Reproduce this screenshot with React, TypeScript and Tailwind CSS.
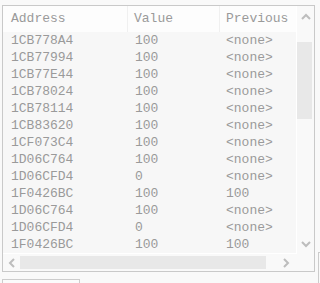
import React from "react";

const rows: [string, string, string][] = [
  ["1CB778A4", "100", "<none>"],
  ["1CB77994", "100", "<none>"],
  ["1CB77E44", "100", "<none>"],
  ["1CB78024", "100", "<none>"],
  ["1CB78114", "100", "<none>"],
  ["1CB83620", "100", "<none>"],
  ["1CF073C4", "100", "<none>"],
  ["1D06C764", "100", "<none>"],
  ["1D06CFD4", "0", "<none>"],
  ["1F0426BC", "100", "100"],
  ["1D06C764", "100", "<none>"],
  ["1D06CFD4", "0", "<none>"],
  ["1F0426BC", "100", "100"],
];

const Chevron = ({ dir }: { dir: "up" | "down" | "left" | "right" }) => {
  const d: Record<string, string> = {
    up: "M1 6 L5 2 L9 6",
    down: "M1 2 L5 6 L9 2",
    left: "M6 1 L2 5 L6 9",
    right: "M2 1 L6 5 L2 9",
  };
  const vert = dir === "up" || dir === "down";
  return (
    <svg width={vert ? 10 : 8} height={vert ? 8 : 10} viewBox={vert ? "0 0 10 8" : "0 0 8 10"}>
      <path d={d[dir]} fill="none" stroke="#bdbdbd" strokeWidth="2" />
    </svg>
  );
};

export default function App() {
  return (
    <div
      className="relative w-[320px] h-[283px] overflow-hidden bg-[#f9f9f9] text-[13px] text-[#9a9a9a]"
      style={{ fontFamily: '"Liberation Mono", "Courier New", monospace' }}
    >
      <div className="ml-[2px] mt-[5px] w-[313px] h-[267px] border border-[#c9c9c9] grid grid-cols-[294px_17px] grid-rows-[248px_17px]">
        {/* viewport */}
        <div className="border-r border-b border-white bg-[#f7f7f7] overflow-hidden">
          <div className="flex h-[26px] items-center bg-[#fdfdfd]">
            <div className="w-[125px] h-full flex items-center pl-[8px] border-r border-[#f0f0f0]">Address</div>
            <div className="w-[92px] h-full flex items-center pl-[6px] border-r border-[#f0f0f0]">Value</div>
            <div className="flex-1 h-full flex items-center pl-[6px]">Previous</div>
          </div>
          {rows.map((r, i) => (
            <div key={i} className="flex h-[17px] items-center">
              <div className="w-[125px] pl-[8px]">{r[0]}</div>
              <div className="w-[92px] pl-[7px]">{r[1]}</div>
              <div className="flex-1 pl-[6px]">{r[2]}</div>
            </div>
          ))}
        </div>
        {/* vertical scrollbar */}
        <div className="flex flex-col items-center">
          <div className="h-[36px] w-full flex justify-center pt-[7px]">
            <Chevron dir="up" />
          </div>
          <div className="w-[15px] h-[77px] bg-[#e8e8e8] self-start" />
          <div className="flex-1" />
          <div className="pb-[6px]">
            <Chevron dir="down" />
          </div>
        </div>
        {/* horizontal scrollbar */}
        <div className="flex items-center">
          <div className="w-[17px] flex justify-center">
            <Chevron dir="left" />
          </div>
          <div className="w-[246px] h-[13px] bg-[#e8e8e8]" />
          <div className="flex-1 flex justify-end pr-[7px]">
            <Chevron dir="right" />
          </div>
        </div>
        <div />
      </div>
      <div className="ml-[2px] mt-[7px] w-[78px] h-[10px] border-t border-l border-r border-[#cccccc] bg-[#fbfbfb]" />
      <div className="absolute left-[318px] top-[252px] w-[4px] h-[40px] border-l border-t border-[#cccccc]" />
    </div>
  );
}
